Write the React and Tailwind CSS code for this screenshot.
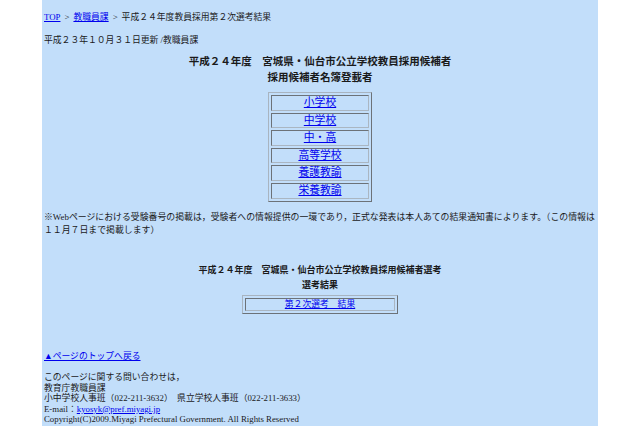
export default function App() {
  const schools = ["小学校", "中学校", "中・高", "高等学校", "養護教諭", "栄養教諭"];
  const font = { fontFamily: '"Liberation Serif", "Noto Sans CJK JP", serif' };

  return (
    <div className="w-full min-h-[426px] bg-white" style={font}>
      <div className="w-[556px] min-h-[426px] mx-auto bg-[#c2defa] px-[2px] text-[#1a1a1a] overflow-hidden">
        {/* breadcrumb */}
        <p className="pt-[11px] text-[8.8px] leading-[13px] whitespace-nowrap">
          <a href="#" className="text-[#0000ee] underline">TOP</a>
          <span className="px-[4px]">&gt;</span>
          <a href="#" className="text-[#0000ee] underline">教職員課</a>
          <span className="px-[4px]">&gt;</span>
          平成２４年度教員採用第２次選考結果
        </p>
        <p className="mt-[9.5px] text-[8.8px] leading-[13px] whitespace-nowrap">
          平成２３年１０月３１日更新 /教職員課
        </p>

        {/* title */}
        <div className="mt-[7.5px] text-center font-bold text-[10.5px] leading-[16px]">
          <p>平成２４年度　宮城県・仙台市公立学校教員採用候補者</p>
          <p>採用候補者名簿登載者</p>
        </div>

        <div className="mt-[6px] flex justify-center">
          <table className="w-[104px] border-separate border-spacing-[2px] border border-t-[#a8b4c0] border-l-[#a8b4c0] border-b-[#6c7278] border-r-[#6c7278]">
            <tbody>
              {schools.map((s) => (
                <tr key={s}>
                  <td className="p-0 text-center text-[10.8px] leading-[13.6px] border border-t-[#6c7278] border-l-[#6c7278] border-b-[#aab6c2] border-r-[#aab6c2]">
                    <a href="#" className="text-[#0000ee] underline">{s}</a>
                  </td>
                </tr>
              ))}
            </tbody>
          </table>
        </div>

        {/* note */}
        <p className="mt-[9px] text-[8.9px] leading-[13px] whitespace-nowrap">
          ※Webページにおける受験番号の掲載は，受験者への情報提供の一環であり，正式な発表は本人あての結果通知書によります。（この情報は
          <br />
          １１月７日まで掲載します）
        </p>

        {/* second title */}
        <div className="mt-[26px] text-center font-bold text-[9px] leading-[15px]">
          <p>平成２４年度　宮城県・仙台市公立学校教員採用候補者選考</p>
          <p>選考結果</p>
        </div>

        <div className="mt-[2.5px] flex justify-center">
          <table className="w-[156px] border-separate border-spacing-[2px] border border-t-[#a8b4c0] border-l-[#a8b4c0] border-b-[#6c7278] border-r-[#6c7278]">
            <tbody>
              <tr>
                <td className="p-0 text-center text-[8.8px] leading-[11px] border border-t-[#6c7278] border-l-[#6c7278] border-b-[#aab6c2] border-r-[#aab6c2]">
                  <a href="#" className="text-[#0000ee] underline">第２次選考　結果</a>
                </td>
              </tr>
            </tbody>
          </table>
        </div>

        {/* back to top */}
        <p className="mt-[36px] text-[8.8px] leading-[13px]">
          <a href="#" className="text-[#0000ee] underline">▲ページのトップへ戻る</a>
        </p>

        {/* footer */}
        <div className="mt-[9px] text-[8.8px] leading-[10.5px] whitespace-nowrap">
          <p>このページに関する問い合わせは，</p>
          <p>教育庁教職員課</p>
          <p>小中学校人事班（022-211-3632）　県立学校人事班（022-211-3633）</p>
          <p>
            E-mail：<a href="#" className="text-[#0000ee] underline">kyosyk@pref.miyagi.jp</a>
          </p>
          <p>Copyright(C)2009.Miyagi Prefectural Government. All Rights Reserved</p>
        </div>
      </div>
    </div>
  );
}
